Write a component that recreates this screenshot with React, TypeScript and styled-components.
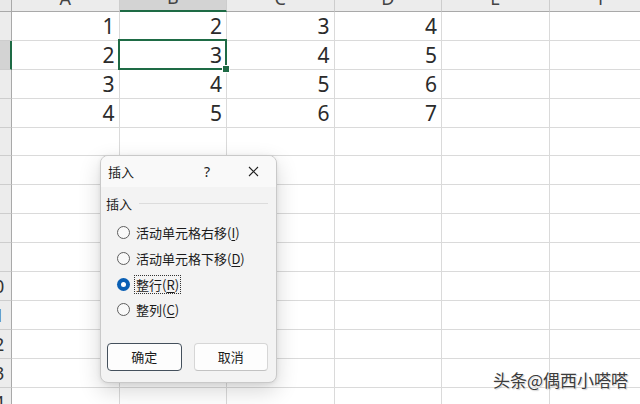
import React from "react";
import styled, { createGlobalStyle, css } from "styled-components";

const GlobalStyle = createGlobalStyle`
  html, body { margin: 0; padding: 0; background: #ffffff; overflow: hidden; }
  * { box-sizing: border-box; }
`;

const Screen = styled.div`
  position: relative;
  width: 640px;
  height: 404px;
  overflow: hidden;
  background: #ffffff;
  font-family: "Noto Sans", "Noto Sans CJK SC", sans-serif;
`;

const Sheet = styled.div`
  display: grid;
  grid-template-columns: 35px repeat(6, 107.5px);
  grid-template-rows: 28px;
  grid-auto-rows: 28.9px;
  margin-left: -23px;
  margin-top: -16px;
`;

const Corner = styled.div`
  background: #e9e9e9;
  border-right: 1px solid #a9a9a9;
  border-bottom: 1px solid #a9a9a9;
`;

const ColHead = styled.div<{ $active?: boolean }>`
  display: flex;
  align-items: center;
  justify-content: center;
  font-size: 18px;
  color: #444;
  background: ${(p) => (p.$active ? "#d3d3d3" : "#ececec")};
  border-right: 1px solid #cdcdcd;
  border-bottom: ${(p) => (p.$active ? "2px solid #1e6b45" : "1px solid #a9a9a9")};
`;

const RowHead = styled.div<{ $active?: boolean }>`
  display: flex;
  align-items: center;
  justify-content: center;
  font-size: 18px;
  color: #333;
  background: ${(p) => (p.$active ? "#d3d3d3" : "#ececec")};
  border-bottom: 1px solid #cdcdcd;
  border-right: ${(p) => (p.$active ? "2px solid #1e6b45" : "1px solid #a9a9a9")};
`;

const Cell = styled.div<{ $selected?: boolean }>`
  position: relative;
  display: flex;
  align-items: flex-end;
  justify-content: flex-end;
  padding: 0 4px 3px 0;
  font-size: 21px;
  line-height: 1;
  color: #2b2b2b;
  border-right: 1px solid #dadada;
  border-bottom: 1px solid #dadada;
  ${(p) =>
    p.$selected &&
    css`
      &::after {
        content: "";
        position: absolute;
        left: -2px;
        top: -2px;
        right: -1px;
        bottom: -1px;
        border: 2px solid #1e6b45;
      }
      &::before {
        content: "";
        position: absolute;
        right: -4px;
        bottom: -4px;
        width: 6px;
        height: 6px;
        background: #1e6b45;
        border: 1px solid #ffffff;
        z-index: 1;
      }
    `}
`;

const Dialog = styled.div`
  position: absolute;
  left: 100px;
  top: 155px;
  width: 177px;
  height: 228px;
  border-radius: 8px;
  border: 1px solid #c9c9c9;
  background: #f3f3f3;
  box-shadow: 0 8px 22px rgba(0, 0, 0, 0.16), 0 1px 4px rgba(0, 0, 0, 0.08);
  overflow: hidden;
  font-family: "Noto Sans CJK SC", "Noto Sans", sans-serif;
  color: #1b1b1b;
  display: flex;
  flex-direction: column;
`;

const TitleBar = styled.div`
  display: flex;
  align-items: center;
  height: 31px;
  background: #f9f9f9;
  flex-shrink: 0;
`;

const Title = styled.div`
  flex: 1;
  padding-left: 7px;
  font-size: 13px;
`;

const TitleButton = styled.div`
  width: 46px;
  height: 31px;
  display: flex;
  align-items: center;
  justify-content: center;
  font-size: 14px;
  font-family: "Noto Sans", sans-serif;
  color: #222;
`;

const Body = styled.div`
  flex: 1;
  display: flex;
  flex-direction: column;
  padding: 8px 8px 0 5px;
`;

const Group = styled.div`
  display: flex;
  align-items: center;
  gap: 7px;
  height: 16px;
  font-size: 13px;
`;

const GroupLine = styled.div`
  flex: 1;
  height: 1px;
  background: #dcdcdc;
`;

const Options = styled.div`
  display: flex;
  flex-direction: column;
  margin-top: 9px;
  padding-left: 11px;
`;

const Option = styled.div`
  display: flex;
  align-items: center;
  gap: 4px;
  height: 25.7px;
  font-size: 13px;
`;

const Radio = styled.span<{ $checked?: boolean }>`
  width: 13px;
  height: 13px;
  border-radius: 50%;
  flex-shrink: 0;
  ${(p) =>
    p.$checked
      ? css`
          background: #0a5fb4;
          display: flex;
          align-items: center;
          justify-content: center;
          &::after {
            content: "";
            width: 5px;
            height: 5px;
            border-radius: 50%;
            background: #ffffff;
          }
        `
      : css`
          border: 1px solid #5e5e5e;
          background: #f9f9f9;
        `}
`;

const OptionLabel = styled.span<{ $focused?: boolean }>`
  padding: 1px 1px;
  border: 1px dotted ${(p) => (p.$focused ? "#333" : "transparent")};
  line-height: 15px;
  u { text-decoration-thickness: 1px; text-underline-offset: 2px; }
`;

const Buttons = styled.div`
  display: flex;
  gap: 12px;
  margin-top: 20px;
  padding-left: 1px;
`;

const Button = styled.div<{ $primary?: boolean }>`
  width: 76px;
  height: 28px;
  display: flex;
  align-items: center;
  justify-content: center;
  font-size: 13px;
  border-radius: 4px;
  background: #fdfdfd;
  ${(p) =>
    p.$primary
      ? css`
          border: 1.5px solid #44505c;
        `
      : css`
          border: 1px solid #d6d6d6;
          border-bottom-color: #c2c2c2;
        `}
`;

const Watermark = styled.div`
  position: absolute;
  right: 12px;
  bottom: 12px;
  font-family: "Noto Sans CJK SC", sans-serif;
  font-size: 17px;
  color: #3c3c3c;
  text-shadow: 0 0 2px #ffffff, 0 0 2px #ffffff, 1px 1px 1px rgba(0, 0, 0, 0.25);
`;

const cols = ["A", "B", "C", "D", "E", "F"];
const data: (number | null)[][] = [
  [1, 2, 3, 4, null, null],
  [2, 3, 4, 5, null, null],
  [3, 4, 5, 6, null, null],
  [4, 5, 6, 7, null, null],
];
const totalRows = 14;

const CloseIcon = () => (
  <svg width="11" height="11" viewBox="0 0 11 11">
    <path d="M1 1 L10 10 M10 1 L1 10" stroke="#222" strokeWidth="1.1" fill="none" />
  </svg>
);

const options = [
  { text: "活动单元格右移(", key: "I", checked: false },
  { text: "活动单元格下移(", key: "D", checked: false },
  { text: "整行(", key: "R", checked: true },
  { text: "整列(", key: "C", checked: false },
];

export default function App() {
  const rows = Array.from({ length: totalRows }, (_, i) => i + 1);
  return (
    <Screen>
      <GlobalStyle />
      <Sheet>
        <Corner />
        {cols.map((c) => (
          <ColHead key={c} $active={c === "B"}>
            {c}
          </ColHead>
        ))}
        {rows.map((r) => (
          <React.Fragment key={r}>
            <RowHead $active={r === 2}>{r}</RowHead>
            {cols.map((c, ci) => {
              const v = data[r - 1] ? data[r - 1][ci] : null;
              return (
                <Cell key={c} $selected={r === 2 && c === "B"}>
                  {v ?? ""}
                </Cell>
              );
            })}
          </React.Fragment>
        ))}
      </Sheet>

      <Dialog>
        <TitleBar>
          <Title>插入</Title>
          <TitleButton>?</TitleButton>
          <TitleButton>
            <CloseIcon />
          </TitleButton>
        </TitleBar>
        <Body>
          <Group>
            <span>插入</span>
            <GroupLine />
          </Group>
          <Options>
            {options.map((o) => (
              <Option key={o.key}>
                <Radio $checked={o.checked} />
                <OptionLabel $focused={o.checked}>
                  {o.text}
                  <u>{o.key}</u>)
                </OptionLabel>
              </Option>
            ))}
          </Options>
          <Buttons>
            <Button $primary>确定</Button>
            <Button>取消</Button>
          </Buttons>
        </Body>
      </Dialog>

      <Watermark>头条@偶西小嗒嗒</Watermark>
    </Screen>
  );
}
